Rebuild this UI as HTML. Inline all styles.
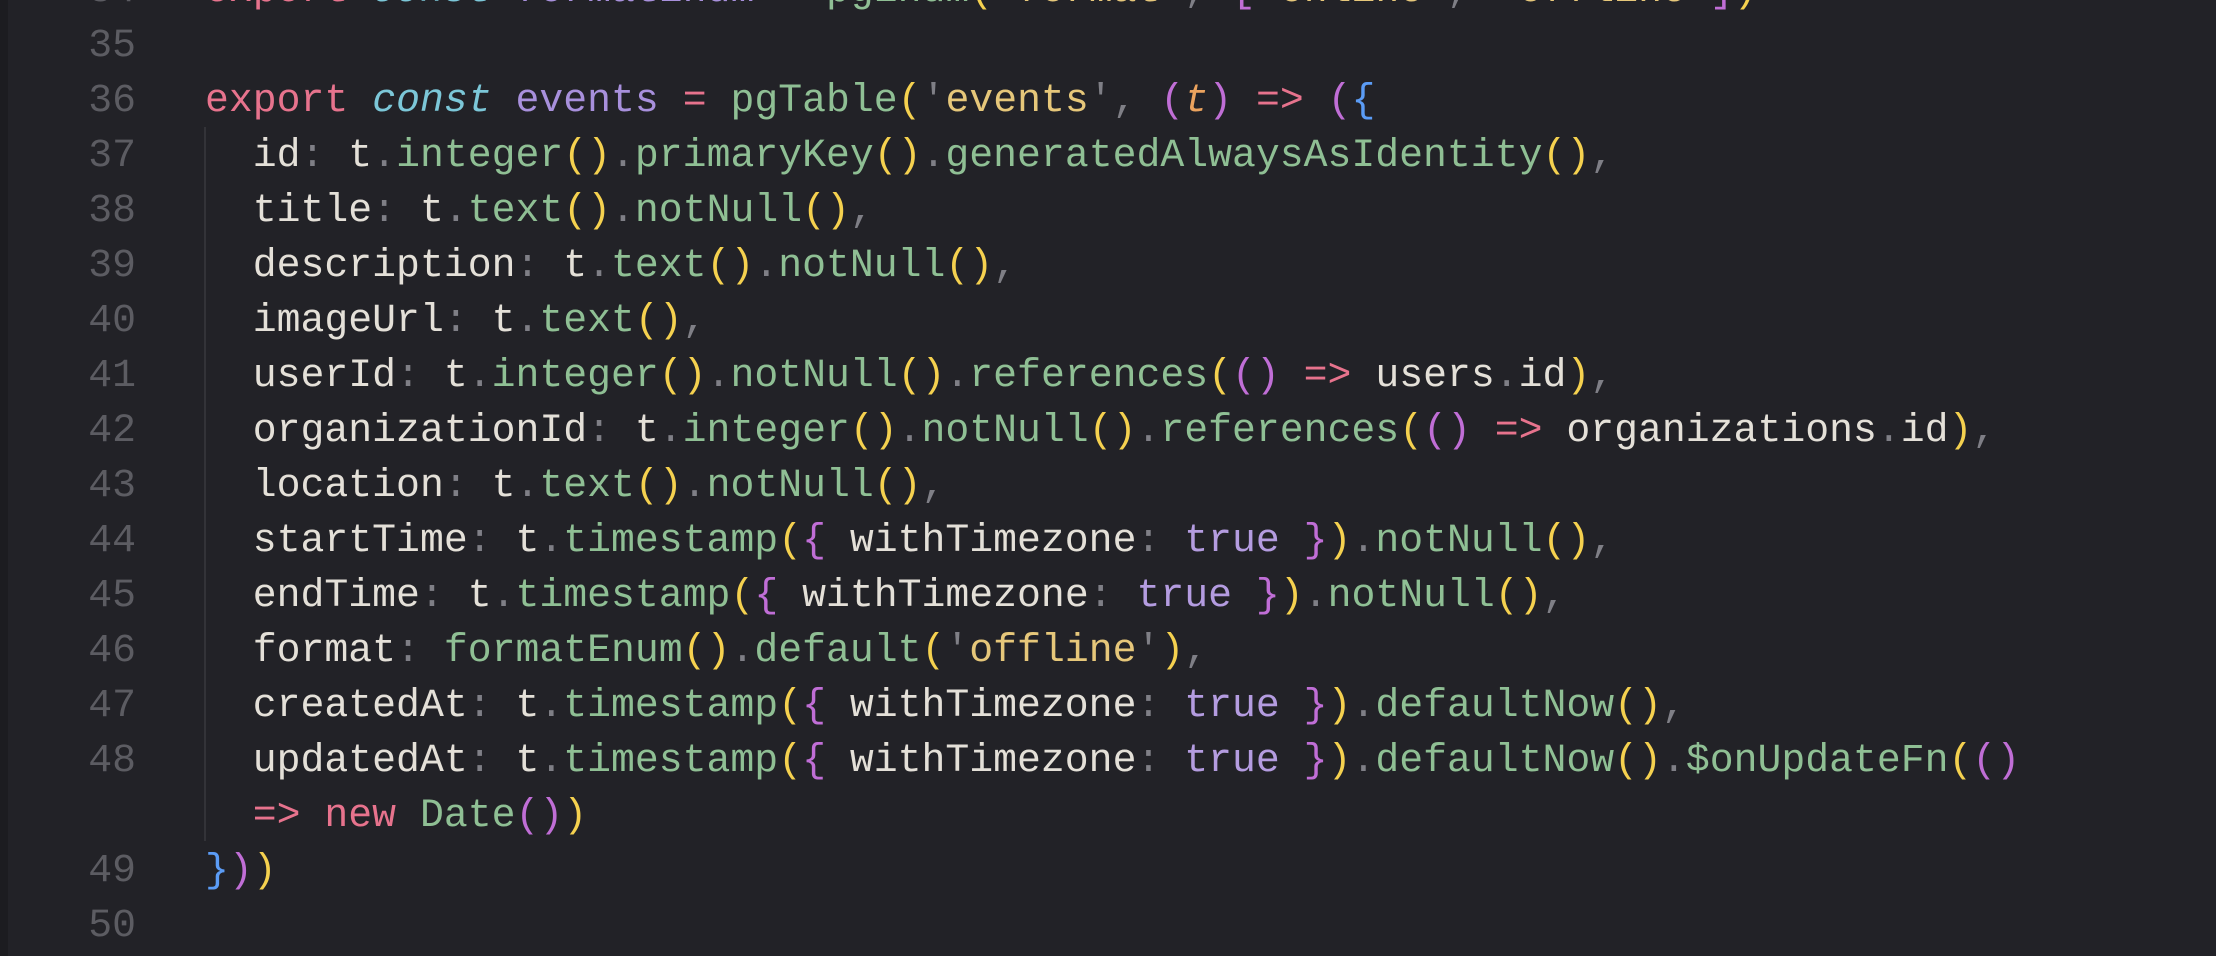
<!DOCTYPE html>
<html><head><meta charset="utf-8"><style>
html,body{margin:0;padding:0;width:2216px;height:956px;overflow:hidden;background:#222227;}
.strip{position:absolute;left:0;top:0;width:8px;height:956px;background:#1c1c20;}
.wrap{position:absolute;left:0;top:-37px;width:2216px;font-family:"Liberation Mono",monospace;font-size:39.8px;line-height:55px;color:#e4e0d8;}
.row{height:55px;position:relative;}
.n{position:absolute;left:0;width:136px;top:0;text-align:right;color:#5c5c62;}
.c{position:absolute;left:205px;top:0;white-space:pre;}
.guide{position:absolute;left:204px;top:127px;width:2px;height:714px;background:#333338;}
.k{color:#e7738d}.cy{color:#7cc7d8;font-style:italic}.pu{color:#a890dc}.g{color:#8fbf94}
.y{color:#f5d14f}.m{color:#c06ed6}.b{color:#5b9cf6}.s{color:#e6c77a}.p{color:#7f7f86}
.o{color:#eba35e;font-style:italic}.tr{color:#b49ce0}
</style></head><body>
<div class="strip"></div>
<div class="guide"></div>
<div class="wrap"><div class="row"><span class="n">34</span><span class="c"><span class="k">export</span> <span class="cy">const</span> <span class="pu">formatEnum</span> <span class="k">=</span> <span class="g">pgEnum</span><span class="y">(</span><span class="p">'</span><span class="s">format</span><span class="p">'</span><span class="p">,</span> <span class="m">[</span><span class="p">'</span><span class="s">online</span><span class="p">'</span><span class="p">,</span> <span class="p">'</span><span class="s">offline</span><span class="p">'</span><span class="m">]</span><span class="y">)</span></span></div><div class="row"><span class="n">35</span></div><div class="row"><span class="n">36</span><span class="c"><span class="k">export</span> <span class="cy">const</span> <span class="pu">events</span> <span class="k">=</span> <span class="g">pgTable</span><span class="y">(</span><span class="p">'</span><span class="s">events</span><span class="p">'</span><span class="p">,</span> <span class="m">(</span><span class="o">t</span><span class="m">)</span> <span class="k">=&gt;</span> <span class="m">(</span><span class="b">{</span></span></div><div class="row"><span class="n">37</span><span class="c">  id<span class="p">:</span> t<span class="p">.</span><span class="g">integer</span><span class="y">()</span><span class="p">.</span><span class="g">primaryKey</span><span class="y">()</span><span class="p">.</span><span class="g">generatedAlwaysAsIdentity</span><span class="y">()</span><span class="p">,</span></span></div><div class="row"><span class="n">38</span><span class="c">  title<span class="p">:</span> t<span class="p">.</span><span class="g">text</span><span class="y">()</span><span class="p">.</span><span class="g">notNull</span><span class="y">()</span><span class="p">,</span></span></div><div class="row"><span class="n">39</span><span class="c">  description<span class="p">:</span> t<span class="p">.</span><span class="g">text</span><span class="y">()</span><span class="p">.</span><span class="g">notNull</span><span class="y">()</span><span class="p">,</span></span></div><div class="row"><span class="n">40</span><span class="c">  imageUrl<span class="p">:</span> t<span class="p">.</span><span class="g">text</span><span class="y">()</span><span class="p">,</span></span></div><div class="row"><span class="n">41</span><span class="c">  userId<span class="p">:</span> t<span class="p">.</span><span class="g">integer</span><span class="y">()</span><span class="p">.</span><span class="g">notNull</span><span class="y">()</span><span class="p">.</span><span class="g">references</span><span class="y">(</span><span class="m">()</span> <span class="k">=&gt;</span> users<span class="p">.</span>id<span class="y">)</span><span class="p">,</span></span></div><div class="row"><span class="n">42</span><span class="c">  organizationId<span class="p">:</span> t<span class="p">.</span><span class="g">integer</span><span class="y">()</span><span class="p">.</span><span class="g">notNull</span><span class="y">()</span><span class="p">.</span><span class="g">references</span><span class="y">(</span><span class="m">()</span> <span class="k">=&gt;</span> organizations<span class="p">.</span>id<span class="y">)</span><span class="p">,</span></span></div><div class="row"><span class="n">43</span><span class="c">  location<span class="p">:</span> t<span class="p">.</span><span class="g">text</span><span class="y">()</span><span class="p">.</span><span class="g">notNull</span><span class="y">()</span><span class="p">,</span></span></div><div class="row"><span class="n">44</span><span class="c">  startTime<span class="p">:</span> t<span class="p">.</span><span class="g">timestamp</span><span class="y">(</span><span class="m">{</span> withTimezone<span class="p">:</span> <span class="tr">true</span> <span class="m">}</span><span class="y">)</span><span class="p">.</span><span class="g">notNull</span><span class="y">()</span><span class="p">,</span></span></div><div class="row"><span class="n">45</span><span class="c">  endTime<span class="p">:</span> t<span class="p">.</span><span class="g">timestamp</span><span class="y">(</span><span class="m">{</span> withTimezone<span class="p">:</span> <span class="tr">true</span> <span class="m">}</span><span class="y">)</span><span class="p">.</span><span class="g">notNull</span><span class="y">()</span><span class="p">,</span></span></div><div class="row"><span class="n">46</span><span class="c">  format<span class="p">:</span> <span class="g">formatEnum</span><span class="y">()</span><span class="p">.</span><span class="g">default</span><span class="y">(</span><span class="p">'</span><span class="s">offline</span><span class="p">'</span><span class="y">)</span><span class="p">,</span></span></div><div class="row"><span class="n">47</span><span class="c">  createdAt<span class="p">:</span> t<span class="p">.</span><span class="g">timestamp</span><span class="y">(</span><span class="m">{</span> withTimezone<span class="p">:</span> <span class="tr">true</span> <span class="m">}</span><span class="y">)</span><span class="p">.</span><span class="g">defaultNow</span><span class="y">()</span><span class="p">,</span></span></div><div class="row"><span class="n">48</span><span class="c">  updatedAt<span class="p">:</span> t<span class="p">.</span><span class="g">timestamp</span><span class="y">(</span><span class="m">{</span> withTimezone<span class="p">:</span> <span class="tr">true</span> <span class="m">}</span><span class="y">)</span><span class="p">.</span><span class="g">defaultNow</span><span class="y">()</span><span class="p">.</span><span class="g">$onUpdateFn</span><span class="y">(</span><span class="m">()</span></span></div><div class="row"><span class="c">  <span class="k">=&gt;</span> <span class="k">new</span> <span class="g">Date</span><span class="m">()</span><span class="y">)</span></span></div><div class="row"><span class="n">49</span><span class="c"><span class="b">}</span><span class="m">)</span><span class="y">)</span></span></div><div class="row"><span class="n">50</span></div></div>
</body></html>
